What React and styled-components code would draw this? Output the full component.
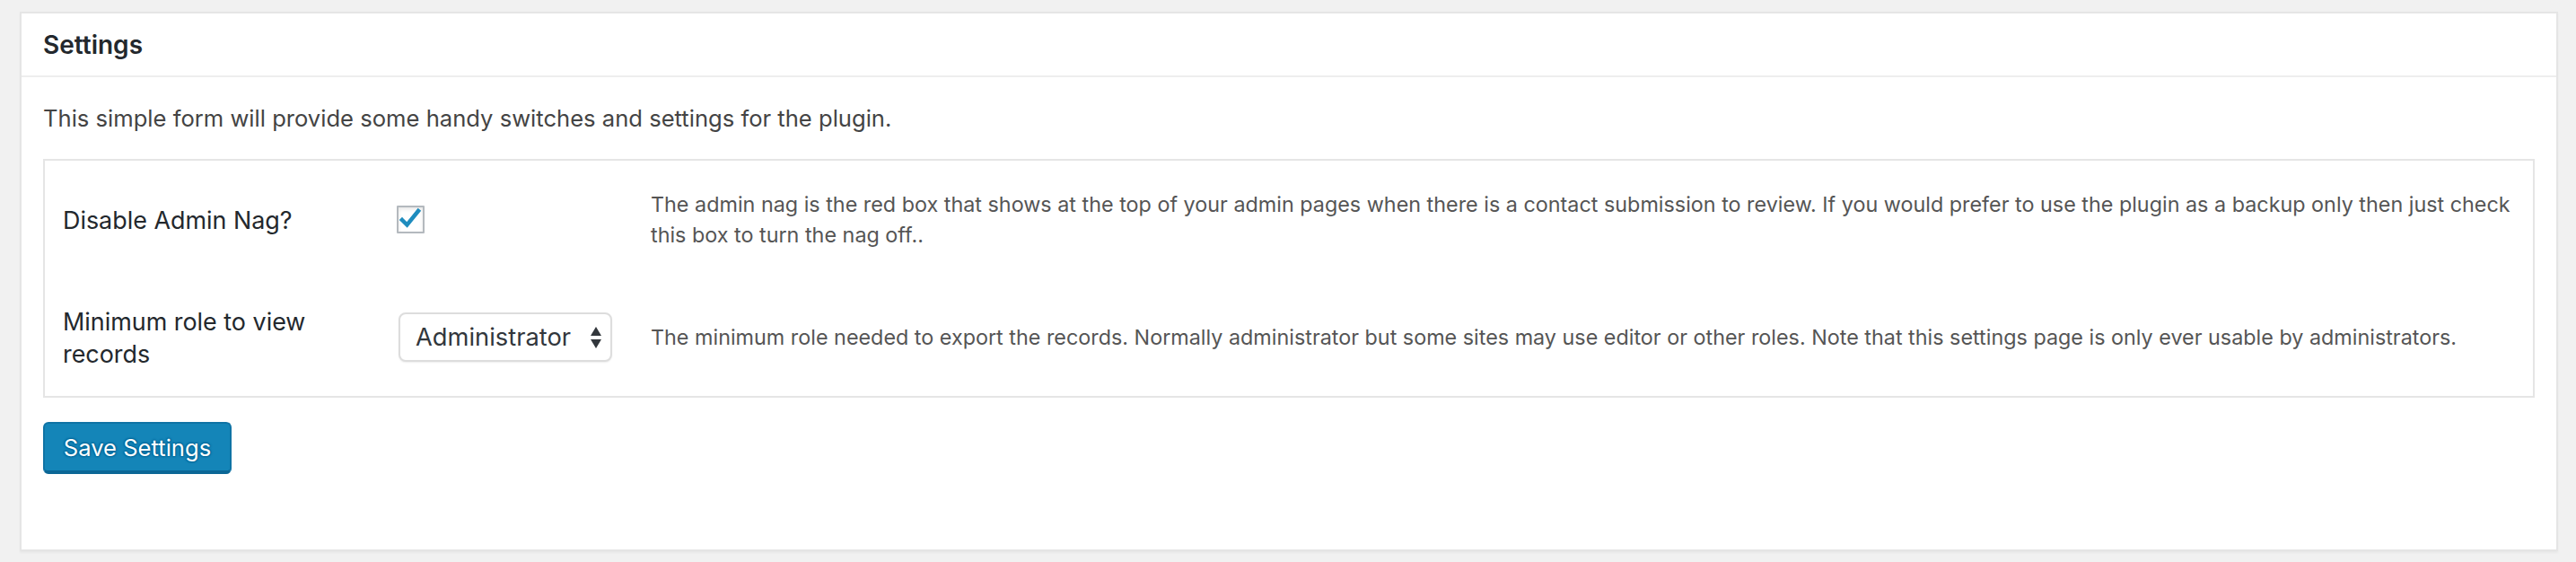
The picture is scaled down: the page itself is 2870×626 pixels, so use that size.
import React from "react";
import styled, { createGlobalStyle } from "styled-components";

const Global = createGlobalStyle`
  html, body { margin: 0; padding: 0; background: #f1f1f1; }
  body { font-family: Inter, Roboto, "Noto Sans", sans-serif; color: #444; }
  * { box-sizing: border-box; }
`;

const Page = styled.div`
  padding: 13px 20px 14px 22px;
`;

const Card = styled.section`
  background: #fff;
  border: 2px solid #e5e5e5;
  box-shadow: 0 2px 2px rgba(0, 0, 0, 0.04);
  min-height: 599px;
`;

const Header = styled.h2`
  margin: 0;
  padding: 17px 24px 16px;
  font-size: 28px;
  line-height: 36px;
  font-weight: 600;
  color: #23282d;
  border-bottom: 2px solid #eee;
`;

const Body = styled.div`
  padding: 26px 24px 84px;
`;

const Intro = styled.p`
  margin: 0 0 26px;
  font-size: 25.6px;
  line-height: 39px;
  color: #444;
`;

const FormBox = styled.div`
  border: 2px solid #e5e5e5;
  display: grid;
  grid-template-columns: 372px 283px 1fr;
  grid-auto-rows: 131px;
  align-items: center;
  padding: 0 18px 0 20px;
`;

const Label = styled.label`
  font-size: 26.9px;
  line-height: 36px;
  color: #23282d;
  padding-right: 20px;
`;

const Control = styled.div`
  display: flex;
  align-items: center;
  padding-left: ${(p) => p.$offset || 0}px;
`;

const Desc = styled.p`
  margin: 0;
  font-size: 23.35px;
  line-height: 34px;
  color: #555;
`;

const CheckBox = styled.span`
  width: 31px;
  height: 31px;
  border: 2px solid #b4b9be;
  border-radius: 1px;
  background: #fff;
  box-shadow: inset 0 2px 4px rgba(0, 0, 0, 0.1);
  display: flex;
  align-items: center;
  justify-content: center;
`;

const Select = styled.div`
  width: 238px;
  height: 55px;
  border: 2px solid #ddd;
  border-radius: 8px;
  background: #fff;
  box-shadow: 0 1px 2px rgba(0, 0, 0, 0.07);
  display: flex;
  align-items: center;
  justify-content: space-between;
  padding: 0 9px 0 17px;
  font-size: 27.3px;
  color: #32373c;
`;

const Button = styled.button`
  margin-top: 27px;
  width: 210px;
  height: 58px;
  background: #1485b8;
  border: 2px solid #0f73a5;
  border-bottom-width: 4px;
  border-bottom-color: #0b6796;
  border-radius: 6px;
  color: #fff;
  font-family: inherit;
  font-size: 25.6px;
  text-shadow: 0 -1px 2px #006799, 1px 0 2px #006799, 0 1px 2px #006799, -1px 0 2px #006799;
  padding: 0;
  cursor: pointer;
`;

function Check() {
  return (
    <svg width="27" height="27" viewBox="0 0 27 27">
      <path d="M4 14 L9.5 19.5 L22 4" fill="none" stroke="#1e8cbe" strokeWidth="4.5" strokeLinecap="square" />
    </svg>
  );
}

function Arrows() {
  return (
    <svg width="14" height="26" viewBox="0 0 14 26">
      <path d="M7 1 L13 11 H1 Z" fill="#32373c" />
      <path d="M1 15 H13 L7 25 Z" fill="#32373c" />
    </svg>
  );
}

export default function App() {
  return (
    <>
      <Global />
      <Page>
        <Card>
          <Header>Settings</Header>
          <Body>
            <Intro>This simple form will provide some handy switches and settings for the plugin.</Intro>
            <FormBox>
              <Label>Disable Admin Nag?</Label>
              <Control>
                <CheckBox>
                  <Check />
                </CheckBox>
              </Control>
              <Desc>
                The admin nag is the red box that shows at the top of your admin pages when there is a contact submission to review. If you would prefer to use the plugin as a backup only then just check this box to turn the nag off..
              </Desc>
              <Label>Minimum role to view records</Label>
              <Control $offset={2}>
                <Select>
                  <span>Administrator</span>
                  <Arrows />
                </Select>
              </Control>
              <Desc>
                The minimum role needed to export the records. Normally administrator but some sites may use editor or other roles. Note that this settings page is only ever usable by administrators.
              </Desc>
            </FormBox>
            <Button>Save Settings</Button>
          </Body>
        </Card>
      </Page>
    </>
  );
}
